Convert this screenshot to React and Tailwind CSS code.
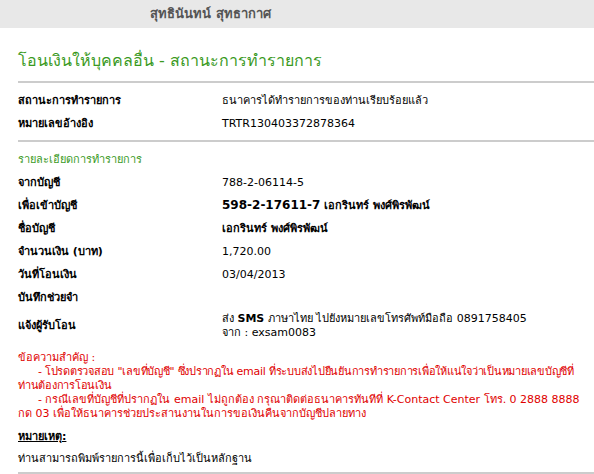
import React from 'react';

const rows1 = [
  { label: 'สถานะการทำรายการ', value: 'ธนาคารได้ทำรายการของท่านเรียบร้อยแล้ว' },
  { label: 'หมายเลขอ้างอิง', value: 'TRTR130403372878364' },
];

const Row = ({ label, children }) => (
  <div className="flex h-[23px] items-center leading-[14px]">
    <div className="w-[204px] shrink-0 font-bold">{label}</div>
    <div>{children}</div>
  </div>
);

const App = () => {
  return (
    <div className="h-screen bg-white text-[11px] text-black overflow-hidden" style={{ fontFamily: '"DejaVu Sans", Tahoma, sans-serif' }}>
      {/* Header bar */}
      <div className="h-[28px] bg-[#e8e8e8] flex items-center">
        <span className="ml-[150px] text-[13px] font-bold text-[#555555]">สุทธินันทน์ สุทธากาศ</span>
      </div>

      <div className="pl-[18px]">
        <h1 className="mt-[23px] h-[22px] text-[16px] text-[#3a9a1e] leading-[20px]">โอนเงินให้บุคคลอื่น - สถานะการทำรายการ</h1>
        <div className="mt-[8px] h-[2px] bg-[#cccccc]" />

        <div className="mt-[6px]">
          {rows1.map((r) => (
            <Row key={r.label} label={r.label}>{r.value}</Row>
          ))}
        </div>
        <div className="mt-[5px] h-[2px] bg-[#cccccc]" />

        <div className="mt-[11px] text-[#3a9a1e] h-[16px] leading-[14px]">รายละเอียดการทำรายการ</div>
        <div className="mt-[2px]">
          <Row label="จากบัญชี">788-2-06114-5</Row>
          <Row label="เพื่อเข้าบัญชี"><b className="text-[12px]">598-2-17611-7</b> <b>เอกรินทร์ พงศ์พิรพัฒน์</b></Row>
          <Row label="ชื่อบัญชี"><b>เอกรินทร์ พงศ์พิรพัฒน์</b></Row>
          <Row label="จำนวนเงิน (บาท)">1,720.00</Row>
          <Row label="วันที่โอนเงิน">03/04/2013</Row>
          <Row label="บันทึกช่วยจำ"></Row>
          <div className="flex items-center mt-[2px] h-[30px]">
            <div className="w-[204px] shrink-0 font-bold leading-[14px]">แจ้งผู้รับโอน</div>
            <div>
              <div className="h-[14px] leading-[14px]">ส่ง <b>SMS</b> ภาษาไทย ไปยังหมายเลขโทรศัพท์มือถือ 0891758405</div>
              <div className="h-[14px] leading-[14px]">จาก : exsam0083</div>
            </div>
          </div>
        </div>

        <div className="mt-[10px] text-[#e00000] text-[11px] pr-[6px]">
          <div className="h-[14px] leading-[14px]">ข้อความสำคัญ :</div>
          <div className="indent-[20px] leading-[14px] tracking-[-0.25px]">- โปรดตรวจสอบ "เลขที่บัญชี" ซึ่งปรากฏใน email ที่ระบบส่งไปยืนยันการทำรายการเพื่อให้แน่ใจว่าเป็นหมายเลขบัญชีที่<br />ท่านต้องการโอนเงิน</div>
          <div className="indent-[20px] leading-[14px]">- กรณีเลขที่บัญชีที่ปรากฏใน email ไม่ถูกต้อง กรุณาติดต่อธนาคารทันทีที่ K-Contact Center โทร. 0 2888 8888 กด 03 เพื่อให้ธนาคารช่วยประสานงานในการขอเงินคืนจากบัญชีปลายทาง</div>
        </div>

        <div className="mt-[9px] h-[14px] leading-[14px] font-bold underline">หมายเหตุ:</div>
        <div className="mt-[8px] h-[14px] leading-[14px]">ท่านสามารถพิมพ์รายการนี้เพื่อเก็บไว้เป็นหลักฐาน</div>
        <div className="mt-[6px] h-[3px] bg-[#cccccc]" />
      </div>
    </div>
  );
};

export default App;
